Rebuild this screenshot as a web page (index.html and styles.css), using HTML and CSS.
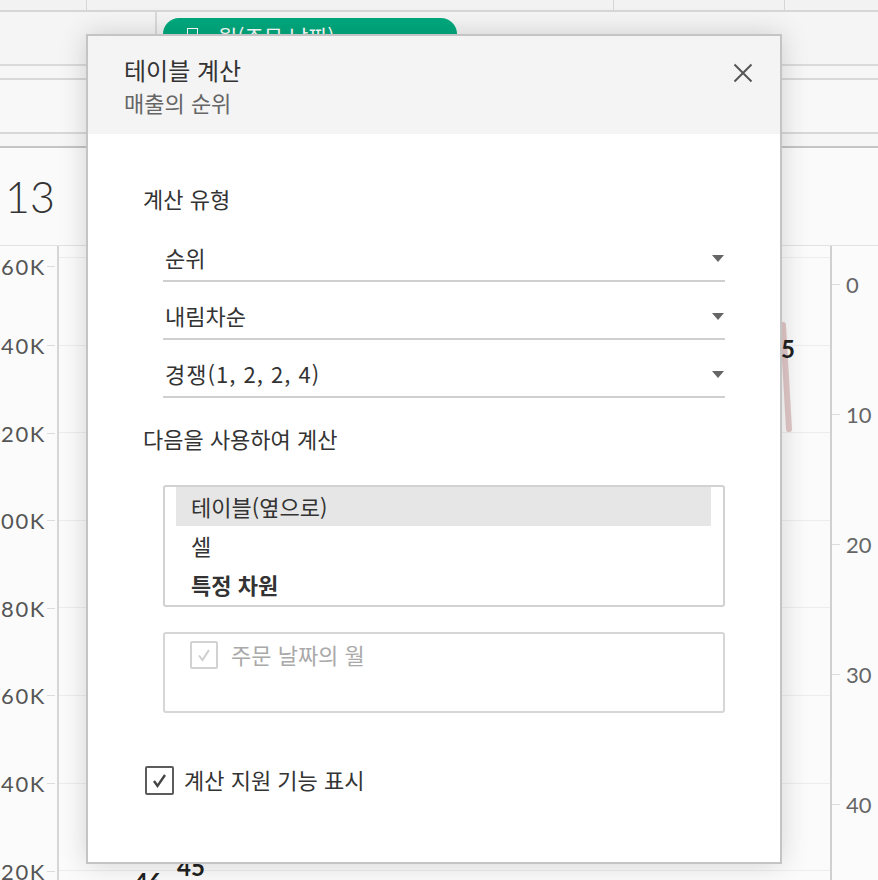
FILE: index.html
```html
<!DOCTYPE html>
<html lang="ko">
<head>
<meta charset="utf-8">
<title>테이블 계산</title>
<link rel="stylesheet" href="styles.css">
</head>
<body>
<div class="ws">
  <div class="strip">
    <div class="sc sc1"></div><div class="sc sc2"></div><div class="sc sc3"></div><div class="sc sc4"></div>
  </div>
  <div class="shelf">
    <div class="shelf-label"></div>
    <div class="shelf-body">
      <div class="pill"><span class="pill-ico"></span><span class="pill-text">월(주문 날짜)</span></div>
    </div>
  </div>
  <div class="band b1"></div>
  <div class="band b2"></div>
  <div class="band b3"></div>
  <div class="kpi"><span class="kpi-num">13</span></div>
  <div class="chart">
    <div class="axis-l">
      <div class="lbl">160K</div>
      <div class="lbl">140K</div>
      <div class="lbl">120K</div>
      <div class="lbl">100K</div>
      <div class="lbl">80K</div>
      <div class="lbl">60K</div>
      <div class="lbl">40K</div>
      <div class="lbl">20K</div>
    </div>
    <div class="plot">
      <svg class="mark-line" width="20" height="120" viewBox="0 0 20 120"><line x1="4" y1="3" x2="10" y2="107" stroke="#e2c8c8" stroke-width="6" stroke-linecap="round"/></svg>
      <span class="mark mark-15">15</span>
      <span class="mark mark-45">45</span>
      <span class="mark mark-46">46</span>
    </div>
    <div class="axis-r">
      <div class="rl">0</div>
      <div class="rl">10</div>
      <div class="rl">20</div>
      <div class="rl">30</div>
      <div class="rl">40</div>
    </div>
  </div>
</div>

<div class="dialog">
  <div class="dlg-head">
    <div class="dlg-titles">
      <div class="dlg-title">테이블 계산</div>
      <div class="dlg-sub">매출의 순위</div>
    </div>
    <svg class="dlg-close" width="20" height="20" viewBox="0 0 20 20"><path d="M1.5 1.5 L18.5 18.5 M18.5 1.5 L1.5 18.5" stroke="#555" stroke-width="2" fill="none"/></svg>
  </div>
  <div class="dlg-body">
    <div class="sec-label">계산 유형</div>
    <div class="selects">
      <div class="select"><span>순위</span><svg class="arrow" width="12" height="7" viewBox="0 0 12 7"><polygon points="0,0 12,0 6,7" fill="#666"/></svg></div>
      <div class="select"><span>내림차순</span><svg class="arrow" width="12" height="7" viewBox="0 0 12 7"><polygon points="0,0 12,0 6,7" fill="#666"/></svg></div>
      <div class="select"><span class="wide">경쟁(1, 2, 2, 4)</span><svg class="arrow" width="12" height="7" viewBox="0 0 12 7"><polygon points="0,0 12,0 6,7" fill="#666"/></svg></div>
    </div>
    <div class="sec-label sec-label2">다음을 사용하여 계산</div>
    <div class="listbox">
      <div class="item item-sel">테이블(옆으로)</div>
      <div class="item">셀</div>
      <div class="item item-bold">특정 차원</div>
    </div>
    <div class="dimbox">
      <div class="chk-row">
        <span class="chk chk-dis"><svg width="24" height="24" viewBox="0 0 24 24"><polyline points="7,12.5 10.5,17 17,7" fill="none" stroke="#cfcfcf" stroke-width="2"/></svg></span>
        <span class="chk-text-dis">주문 날짜의 월</span>
      </div>
    </div>
    <div class="chk-row chk-main">
      <span class="chk chk-on"><svg width="25" height="25" viewBox="0 0 25 25"><polyline points="7,13 10.5,18 18,7" fill="none" stroke="#444" stroke-width="2.4"/></svg></span>
      <span class="chk-text">계산 지원 기능 표시</span>
    </div>
  </div>
</div>
</body>
</html>
```
FILE: styles.css
```css
* { box-sizing: border-box; }
html, body { margin: 0; padding: 0; }
body {
  width: 878px;
  height: 880px;
  overflow: hidden;
  background: #f4f4f4;
  font-family: "Noto Sans CJK KR", "Noto Sans", sans-serif;
  color: #333;
  position: relative;
}

.ws { display: flex; flex-direction: column; height: 880px; }

.strip { height: 12px; display: flex; border-bottom: 2px solid #d6d6d6; background: #f2f2f2; }
.sc { border-right: 1px solid #d6d6d6; height: 100%; }
.sc1 { width: 87px; }
.sc2 { width: 527px; }
.sc3 { width: 171px; }
.sc4 { flex: 1; border-right: none; }

.shelf { height: 54px; display: flex; border-bottom: 2px solid #dadada; background: #f5f5f5; }
.shelf-label { width: 157px; border-right: 2px solid #dadada; }
.shelf-body { flex: 1; padding: 6px 0 0 6px; }
.pill {
  width: 294px; height: 40px; background: #02a97e; border-radius: 16px;
  display: flex; align-items: flex-start; padding: 4px 0 0 24px; gap: 20px; color: #fff;
}
.pill-ico { width: 11px; height: 11px; border: 1.5px solid #fff; margin-top: 6px; }
.pill-text { font-size: 21px; line-height: 28px; }

.band { border-bottom: 2px solid #d8d8d8; background: #f6f6f6; }
.b1 { height: 14px; }
.b2 { height: 54px; background: #f8f8f8; }
.b3 { height: 14px; border-bottom-color: #c4c4c4; }

.kpi { height: 97px; display: flex; align-items: center; padding-left: 5px; background: #fafafa; }
.kpi-num { font-family: "Lato", sans-serif; font-weight: 300; font-size: 43px; color: #333; line-height: 1; }

.chart { flex: 1; display: flex; border-top: 1px solid #e2e2e2; background: #fbfbfb; overflow: hidden; }
.axis-l { width: 59px; border-right: 2px solid #d6d6d6; display: flex; flex-direction: column; }
.lbl {
  height: 87.6px; flex: none; display: flex; align-items: center; justify-content: flex-end;
  font-family: "Lato", sans-serif; font-size: 22px; color: #555; letter-spacing: 1.6px;
  white-space: nowrap;
}
.lbl::after { content: ""; width: 8px; height: 1px; background: #dcdcdc; margin-left: 1px; margin-right: 2px; flex: none; }
.axis-l .lbl:first-child { margin-top: -31.8px; padding-top: 16px; }

.plot {
  flex: 1; position: relative;
  background-image: repeating-linear-gradient(to bottom, #ededed 0, #ededed 1px, transparent 1px, transparent 87.6px);
  background-position: 0 11px;
}
.mark-line { position: absolute; left: 720px; top: 76px; }
.mark { position: absolute; font-family: "Lato", sans-serif; font-weight: 700; color: #222; font-size: 24px; line-height: 1; }
.mark-15 { left: 708px; top: 91px; }
.mark-45 { left: 118px; top: 609px; }
.mark-46 { left: 75px; top: 624px; }

.axis-r { width: 48px; border-left: 2px solid #d0d0d0; display: flex; flex-direction: column; }
.rl {
  height: 130px; flex: none; display: flex; align-items: center;
  font-family: "Lato", sans-serif; font-size: 22px; color: #666;
}
.rl::before { content: ""; width: 8px; height: 1px; background: #dcdcdc; margin-right: 6px; }
.axis-r .rl:first-child { margin-top: -27px; }

/* dialog */
.dialog {
  position: absolute; left: 86px; top: 34px; width: 696px; height: 830px;
  background: #fff; border: 2px solid #c4c4c4;
  box-shadow: 0 0 26px rgba(0, 0, 0, 0.16);
  display: flex; flex-direction: column;
}
.dlg-head {
  height: 98px; background: #f4f4f4; display: flex; justify-content: space-between;
  padding: 19px 27px 0 36px;
}
.dlg-title { font-size: 24px; line-height: 30px; color: #333; }
.dlg-sub { font-size: 22px; line-height: 28px; color: #666; margin-top: 3px; }
.dlg-close { margin-top: 8px; }

.dlg-body { padding: 49px 55px 0 55px; display: flex; flex-direction: column; }
.sec-label { font-size: 22px; line-height: 30px; color: #333; }
.sec-label2 { margin-top: 25px; }
.selects { margin: 11px 0 0 20px; }
.select {
  height: 58px; border-bottom: 2px solid #d0d0d0; display: flex; align-items: flex-end;
  justify-content: space-between; padding: 0 1px 8px 2px; font-size: 22px; line-height: 30px; color: #333;
}
.wide { letter-spacing: 1px; }
.arrow { margin-bottom: 10px; }

.listbox {
  margin: 32px 0 0 20px; border: 2px solid #d2d2d2; border-radius: 3px; padding: 0 12px 1px 11px;
}
.item { height: 39px; display: flex; align-items: center; padding-left: 15px; font-size: 22px; color: #333; padding-bottom: 2px; }
.item-sel { background: #e6e6e6; }
.item-bold { font-weight: 700; }

.dimbox {
  margin: 25px 0 0 20px; height: 81px; border: 2px solid #d6d6d6; border-radius: 3px; padding: 7px 0 0 25px;
}
.chk-row { display: flex; align-items: center; gap: 13px; }
.chk { display: flex; align-items: center; justify-content: center; border-radius: 2px; flex: none; }
.chk-dis { width: 28px; height: 28px; border: 2px solid #d2d2d2; }
.chk-text-dis { font-size: 22px; color: #a9a9a9; line-height: 28px; margin-top: -3px; }
.chk-main { margin: 53px 0 0 2px; gap: 10px; }
.chk-on { width: 29px; height: 29px; border: 2px solid #5c5c5c; }
.chk-text { font-size: 22px; color: #333; line-height: 28px; margin-top: -3px; }
```
